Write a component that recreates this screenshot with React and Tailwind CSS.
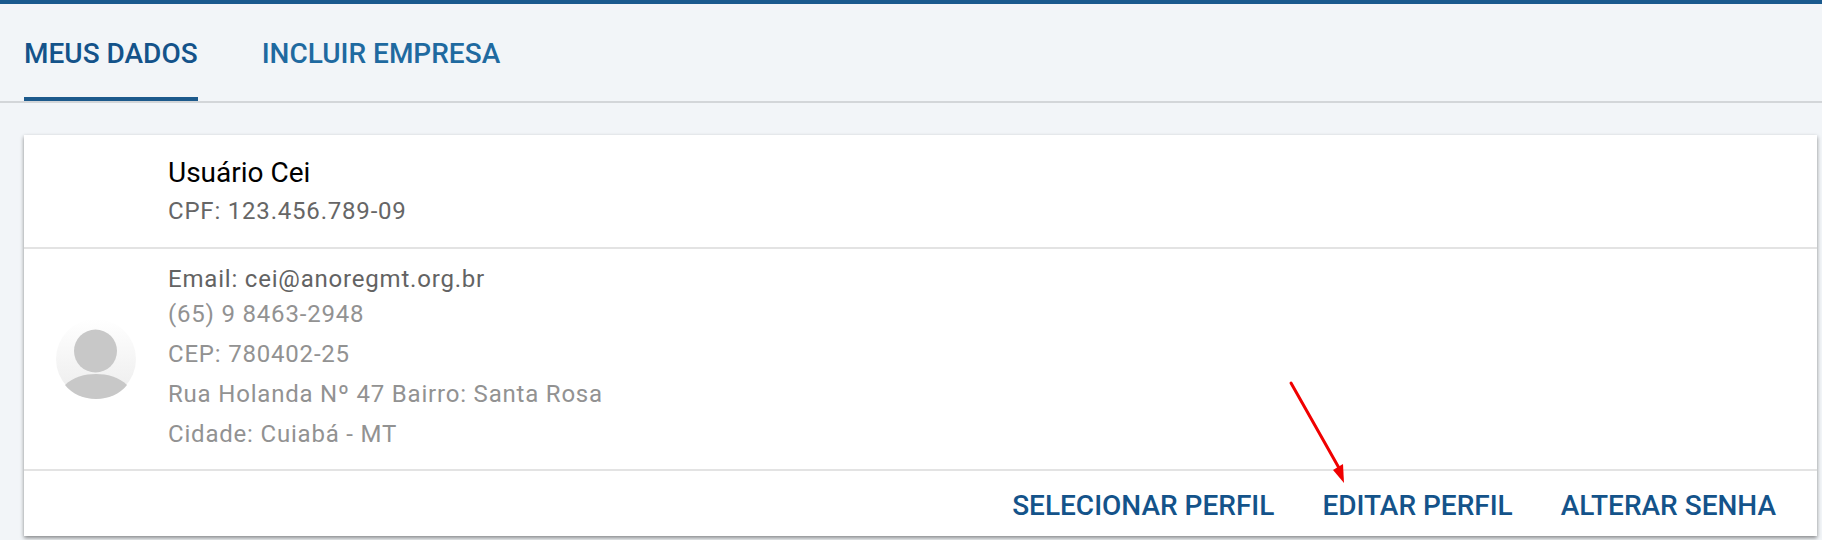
export default function App() {
  const font = { fontFamily: 'Roboto, sans-serif' };
  return (
    <div style={font} className="relative w-[1822px] h-[540px] overflow-hidden bg-[#f2f5f8] border-t-4 border-[#1a5a8e]">
      <div className="flex h-[99px] border-b-2 border-[#d3d6d9] pl-6 gap-16">
        <div className="h-[97px] flex items-center border-b-4 border-[#1d5a8c] pt-[6px] text-[28px] font-medium text-[#14538a]">MEUS DADOS</div>
        <div className="h-[97px] flex items-center pt-[2px] text-[28px] font-medium text-[#1f6aa0]">INCLUIR EMPRESA</div>
      </div>
      <div className="ml-6 mr-[5px] mt-8 bg-white shadow-[0_2px_4px_rgba(0,0,0,0.45)]">
        <div className="h-[114px] border-b-2 border-[#e3e3e3] pl-[144px] pt-[18px]">
          <div className="text-[28px] leading-[40px] text-black">Usuário Cei</div>
          <div className="text-[24px] leading-[30px] tracking-[0.8px] text-[#666666] mt-[3px]">CPF: 123.456.789-09</div>
        </div>
        <div className="h-[222px] border-b-2 border-[#e3e3e3] flex items-center">
          <div className="w-[144px] pl-8 shrink-0">
            <svg width="80" height="80" viewBox="0 0 80 80">
              <defs>
                <linearGradient id="a" x1="0" y1="0" x2="0" y2="1">
                  <stop offset="0" stopColor="#ffffff" />
                  <stop offset="1" stopColor="#ececec" />
                </linearGradient>
              </defs>
              <circle cx="40" cy="40" r="40" fill="url(#a)" />
              <circle cx="39.5" cy="32" r="21.5" fill="#c8c8c8" />
              <path d="M9 66 C17 58 29 55 40 55 C51 55 63 58 71 66 C64 75 52 80 40 80 C28 80 16 75 9 66 Z" fill="#c8c8c8" />
            </svg>
          </div>
          <div className="text-[24px] tracking-[0.8px] flex flex-col self-start pt-[15px]">
            <div className="leading-[30px] text-[#636363]">Email: cei@anoregmt.org.br</div>
            <div className="leading-[30px] mt-[5px] text-[#929292]">(65) 9 8463-2948</div>
            <div className="leading-[30px] mt-[10px] text-[#929292]">CEP: 780402-25</div>
            <div className="leading-[30px] mt-[10px] text-[#929292]">Rua Holanda Nº 47 Bairro: Santa Rosa</div>
            <div className="leading-[30px] mt-[10px] text-[#929292]">Cidade: Cuiabá - MT</div>
          </div>
        </div>
        <div className="h-[65px] flex items-center justify-end gap-12 pr-[41px] pt-[4px] text-[28px] font-medium text-[#14538a]">
          <span>SELECIONAR PERFIL</span>
          <span>EDITAR PERFIL</span>
          <span>ALTERAR SENHA</span>
        </div>
      </div>
      <svg className="absolute left-[1285px] top-[374px]" width="70" height="110" viewBox="0 0 70 110">
        <line x1="6" y1="5" x2="54" y2="90" stroke="#f00000" strokeWidth="3" strokeLinecap="round" />
        <path d="M59 105 L48 92 L58 86 Z" fill="#f00000" />
      </svg>
    </div>
  );
}
